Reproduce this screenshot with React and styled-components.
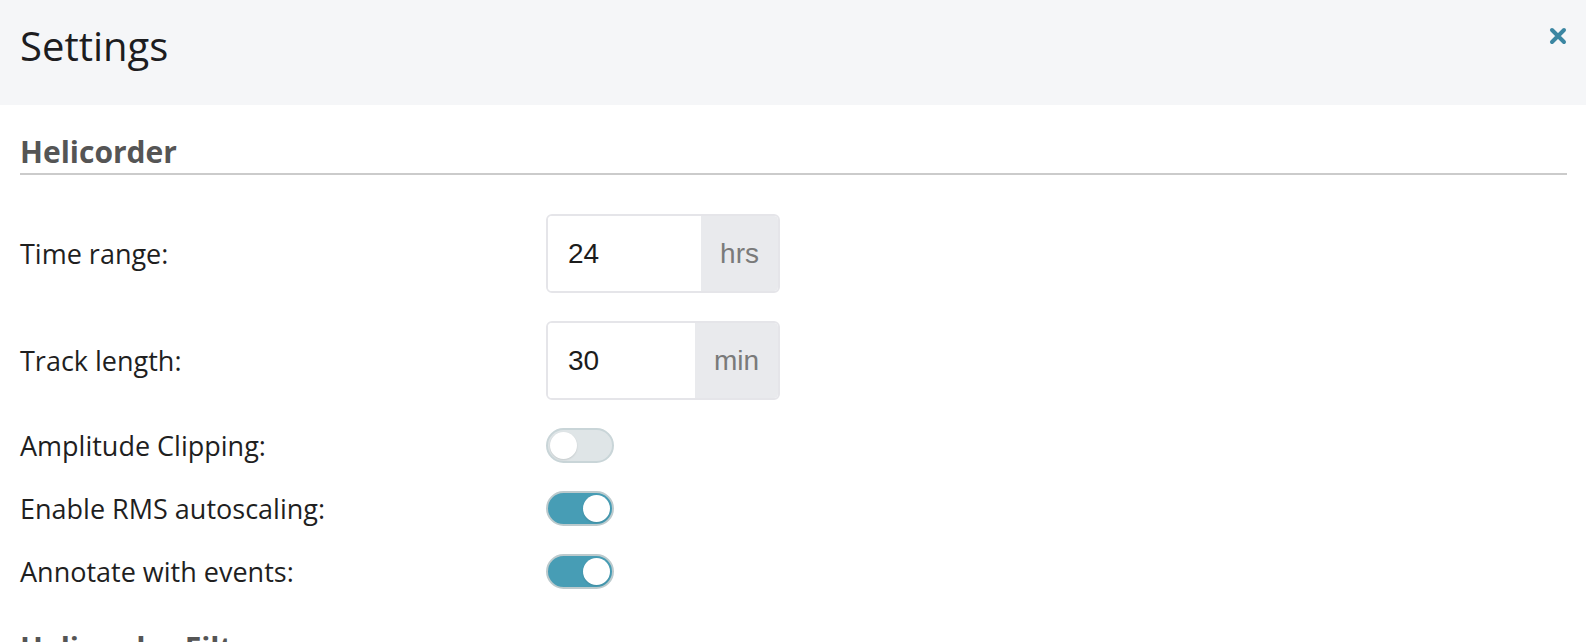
import React, { useState } from 'react';
import styled, { createGlobalStyle } from 'styled-components';

const GlobalStyle = createGlobalStyle`
  html, body {
    margin: 0;
    padding: 0;
    background: #fff;
  }
  body {
    font-family: 'Open Sans', 'Liberation Sans', sans-serif;
    color: #222;
  }
`;

const Modal = styled.div`
  width: 1586px;
  min-height: 642px;
  background: #fff;
  overflow: hidden;
`;

const Header = styled.div`
  height: 105px;
  box-sizing: border-box;
  background: #f5f6f8;
  display: flex;
  justify-content: space-between;
  align-items: flex-start;
  padding: 26px 19px 0 20px;
`;

const Title = styled.h1`
  margin: 0;
  font-size: 40px;
  line-height: 40px;
  font-weight: 400;
  color: #1d1d1f;
`;

const CloseButton = styled.button`
  border: 0;
  background: none;
  padding: 0;
  margin-top: 1px;
  width: 18px;
  height: 18px;
  cursor: pointer;
  display: flex;

  svg {
    width: 18px;
    height: 18px;
  }
`;

const Body = styled.div`
  padding: 32px 19px 0 20px;
`;

const SectionTitle = styled.h2`
  margin: 0;
  font-size: 30px;
  line-height: 30px;
  font-weight: 700;
  color: #555;
  padding-bottom: 6px;
  border-bottom: 2px solid #cbcbcb;
`;

const Form = styled.div`
  display: grid;
  grid-template-columns: 526px auto;
  row-gap: 28px;
  align-items: center;
  justify-items: start;
  margin-top: 39px;
  margin-bottom: 44px;
`;

const Label = styled.label`
  font-size: 27px;
  line-height: 35px;
  color: #1f1f1f;
`;

const InputGroup = styled.div`
  display: flex;
  width: 234px;
  height: 79px;
  box-sizing: border-box;
  border: 2px solid #e5e5e9;
  border-radius: 6px;
  overflow: hidden;
`;

const NumberInput = styled.input`
  flex: 1;
  min-width: 0;
  border: 0;
  outline: none;
  padding: 0 0 0 20px;
  font-family: 'Liberation Sans', Arial, sans-serif;
  font-size: 28px;
  color: #1c1c1c;
  background: #fff;
`;

const Addon = styled.span`
  display: flex;
  align-items: center;
  padding: 0 19px;
  background: #e9eaed;
  font-family: 'Liberation Sans', Arial, sans-serif;
  font-size: 28px;
  color: #7a7a7a;
`;

const Toggle = styled.button`
  position: relative;
  width: 68px;
  height: 35px;
  padding: 0;
  box-sizing: border-box;
  border-radius: 18px;
  border: 2px solid ${(p) => (p.$on ? '#bccacd' : '#c9d5d8')};
  background: ${(p) => (p.$on ? '#479db5' : '#dfe5e7')};
  cursor: pointer;

  &::after {
    content: '';
    position: absolute;
    top: 2px;
    left: ${(p) => (p.$on ? '35px' : '2px')};
    width: 27px;
    height: 27px;
    border-radius: 50%;
    background: #fff;
    box-shadow: 0 1px 2px rgba(0, 0, 0, 0.12);
  }
`;

const NextSection = styled(SectionTitle)`
  border-bottom: 0;
`;

const settings = [
  { key: 'clip', label: 'Amplitude Clipping:', on: false },
  { key: 'rms', label: 'Enable RMS autoscaling:', on: true },
  { key: 'events', label: 'Annotate with events:', on: true },
];

export default function App() {
  const [toggles, setToggles] = useState(
    Object.fromEntries(settings.map((s) => [s.key, s.on]))
  );

  return (
    <Modal>
      <GlobalStyle />
      <Header>
        <Title>Settings</Title>
        <CloseButton aria-label="Close">
          <svg viewBox="0 0 18 18">
            <path
              d="M3 3 L15 15 M15 3 L3 15"
              stroke="#3b86a2"
              strokeWidth="4"
              strokeLinecap="round"
            />
          </svg>
        </CloseButton>
      </Header>
      <Body>
        <SectionTitle>Helicorder</SectionTitle>
        <Form>
          <Label>Time range:</Label>
          <InputGroup>
            <NumberInput defaultValue="24" />
            <Addon>hrs</Addon>
          </InputGroup>
          <Label>Track length:</Label>
          <InputGroup>
            <NumberInput defaultValue="30" />
            <Addon>min</Addon>
          </InputGroup>
          {settings.map((s) => (
            <React.Fragment key={s.key}>
              <Label>{s.label}</Label>
              <Toggle
                $on={toggles[s.key]}
                onClick={() => setToggles((t) => ({ ...t, [s.key]: !t[s.key] }))}
              />
            </React.Fragment>
          ))}
        </Form>
        <NextSection>Helicorder Filter</NextSection>
      </Body>
    </Modal>
  );
}
